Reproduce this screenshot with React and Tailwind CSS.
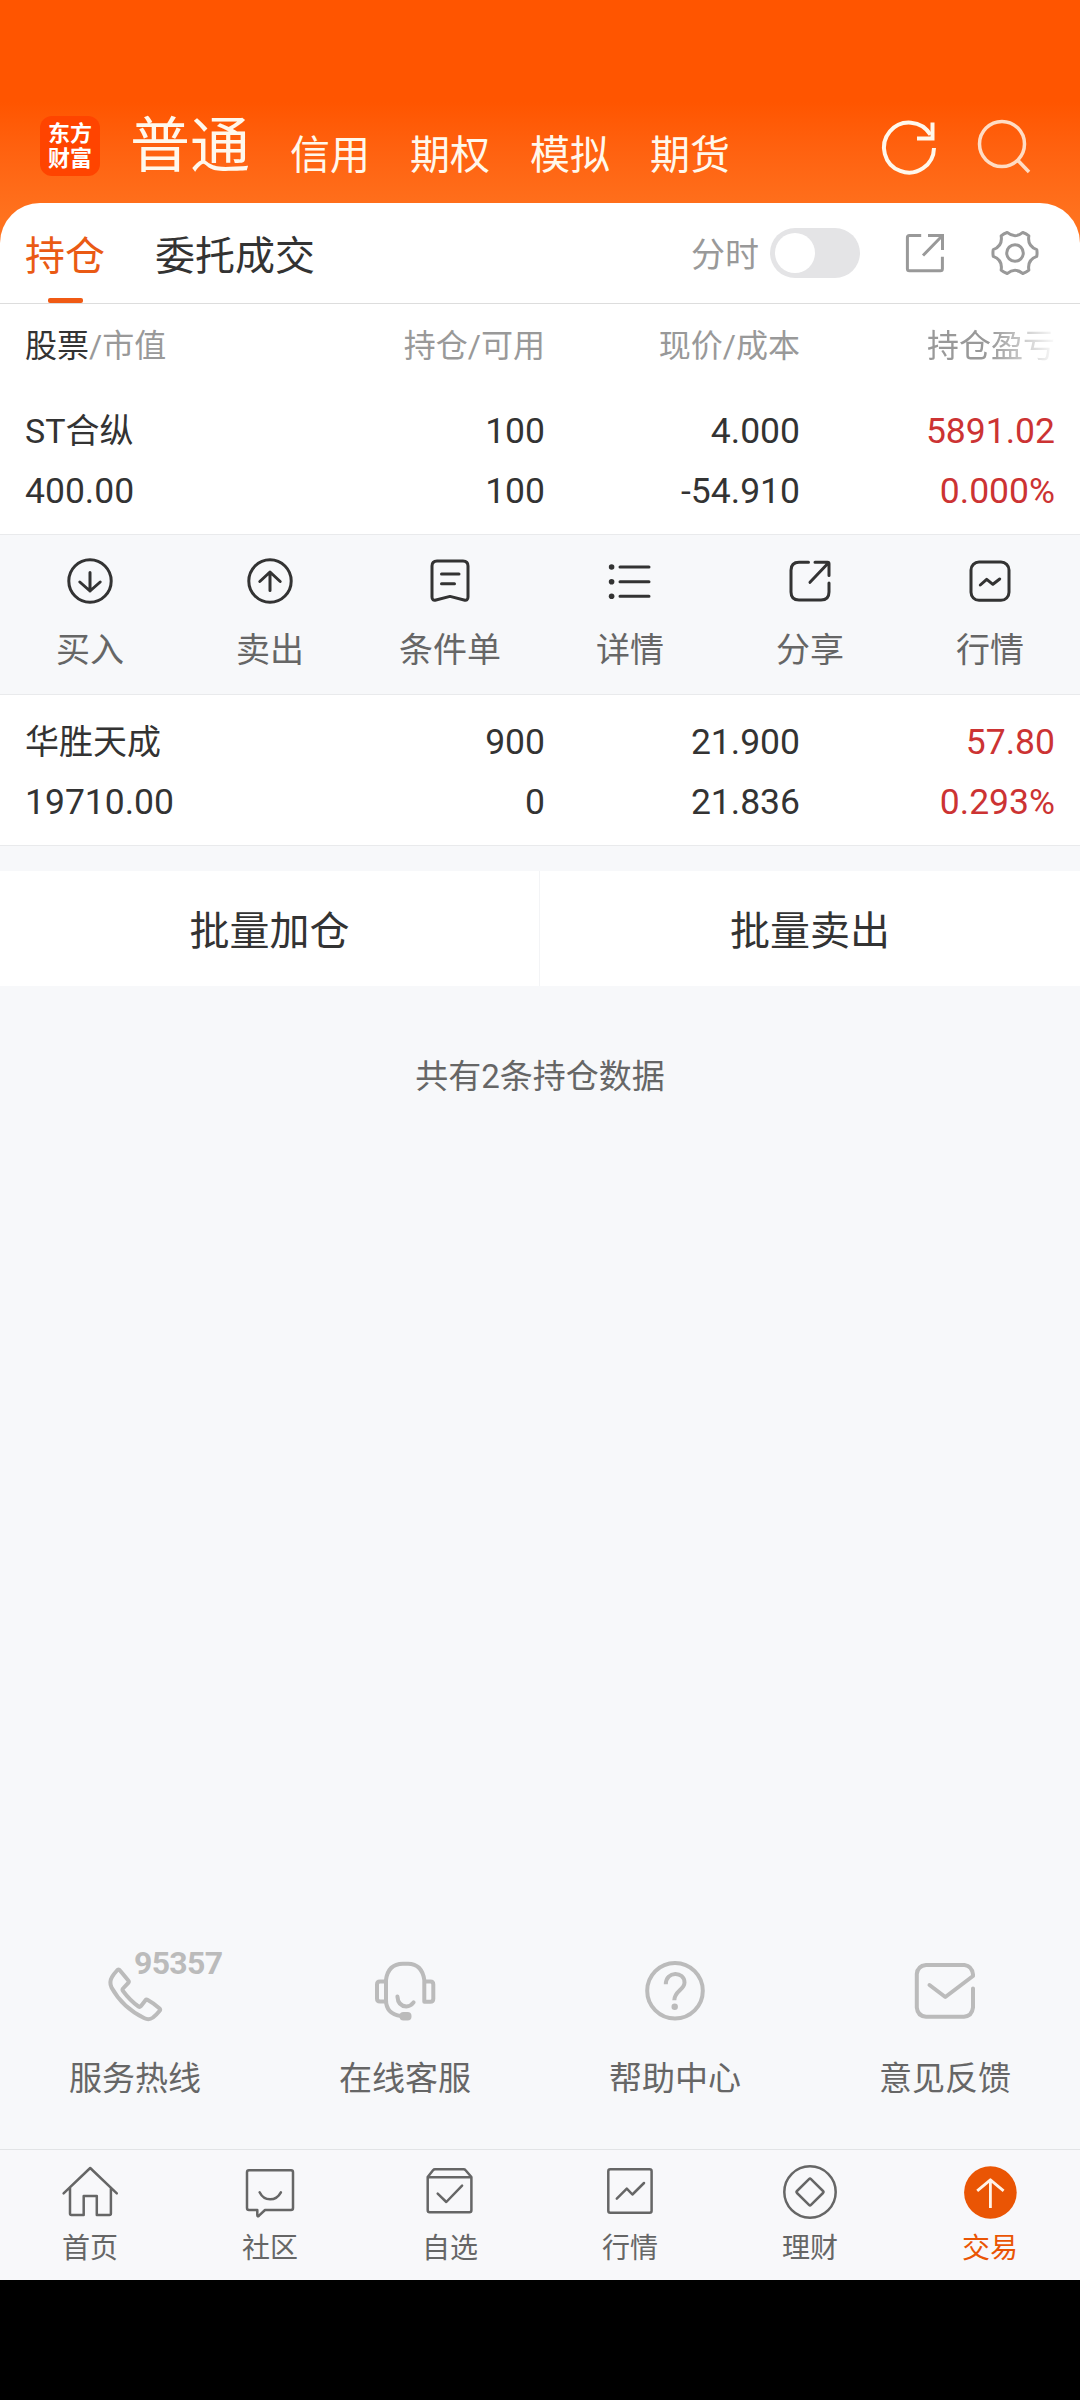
import React from 'react';

const marketTabs = ['信用', '期权', '模拟', '期货'];

const holdings = [
  {
    name: 'ST合纵',
    value: '400.00',
    cells: [
      ['100', '100'],
      ['4.000', '-54.910'],
    ],
    profit: ['5891.02', '0.000%'],
  },
  {
    name: '华胜天成',
    value: '19710.00',
    cells: [
      ['900', '0'],
      ['21.900', '21.836'],
    ],
    profit: ['57.80', '0.293%'],
  },
];

// Outline of a six-lobed gear centred on 24,24
const gearPath = () => {
  const point = (deg, r) => {
    const a = (deg * Math.PI) / 180;
    return `${(24 + r * Math.cos(a)).toFixed(2)} ${(24 + r * Math.sin(a)).toFixed(2)}`;
  };
  let d = `M${point(-9, 22)}`;
  for (let i = 0; i < 6; i++) {
    const a = i * 60;
    d += `Q${point(a, 22.4)} ${point(a + 9, 22)}Q${point(a + 30, 14)} ${point(a + 51, 22)}`;
  }
  return d + 'Z';
};

const Icon = ({ size, stroke, className, children }) => (
  <svg
    width={size}
    height={size}
    viewBox={`0 0 ${size} ${size}`}
    fill="none"
    stroke="currentColor"
    strokeWidth={stroke}
    strokeLinecap="round"
    strokeLinejoin="round"
    className={`shrink-0 overflow-visible ${className || ''}`}
  >
    {children}
  </svg>
);

const actions = [
  {
    label: '买入',
    icon: (
      <>
        <circle cx="24" cy="24" r="21.2" />
        <path d="M24 15.5V34M13.8 25 24 34l10.2-9" />
      </>
    ),
  },
  {
    label: '卖出',
    icon: (
      <>
        <circle cx="24" cy="24" r="21.2" />
        <path d="M24 33.5V15M13.8 24.5 24 15l10.2 9.5" />
      </>
    ),
  },
  {
    label: '条件单',
    icon: (
      <>
        <path d="M11 4h26q5 0 5 5v31q0 4-4 3l-14-3.6L10 43q-4 1-4-3V9q0-5 5-5Z" />
        <path d="M15.5 17H33M15.5 26.7h13" />
      </>
    ),
  },
  {
    label: '详情',
    icon: (
      <>
        <path d="M14 10h29M14 24.7h29M14 39.3h29" />
        <g fill="currentColor" stroke="none">
          <circle cx="5.6" cy="10" r="2.8" />
          <circle cx="5.6" cy="24.7" r="2.8" />
          <circle cx="5.6" cy="39.3" r="2.8" />
        </g>
      </>
    ),
  },
  {
    label: '分享',
    icon: (
      <>
        <path d="M22.5 5.3H13q-8 0-8 8V35q0 8 8 8h22q8 0 8-8v-9" />
        <path d="M29 5.3h12.5q1.5 0 1.5 1.5V18.5M24 25.3 42.3 6" />
      </>
    ),
  },
  {
    label: '行情',
    icon: (
      <>
        <rect x="5" y="5" width="38" height="38.3" rx="8" />
        <path d="m14.3 28 6.4-5.7 6.2 5 6.8-5.3" />
      </>
    ),
  },
];

const services = [
  {
    label: '服务热线',
    badge: '95357',
    icon: (
      <path d="M12 10.5q1.5-2 3 0l8.3 10q1 1.2 0 2.3L18 28.5q-1 1.2 0 2.5 7 9.5 15.5 15.5 1.3.8 2.3-.3l4.5-5.8q1-1.2 2.5-.4 5.5 3 11.5 8.2 1.5 1.3.2 2.800-3 3.7-6.500 6.5-4 3-8.500.8Q17.500 47.5 6.500 27.500 4 22 7 17q2-3.300 5-6.500Z" />
    ),
  },
  {
    label: '在线客服',
    icon: (
      <>
        <path d="M26 56Q11 54 11 40V20Q13 4 28 3.800h5Q47 4 49.300 20V41.700h6q3 0 3-3V24.500q0-3-3-3h-6M11 21.500H5q-3 0-3 3v14q0 3 3 3h6" />
        <path d="M22.400 36.500q.6 9.500 9 9.900 4.300 0 7.200-4" />
        <rect x="24.5" y="52" width="12" height="8.5" rx="4" fill="currentColor" stroke="none" />
      </>
    ),
  },
  {
    label: '帮助中心',
    icon: (
      <>
        <circle cx="30" cy="30.8" r="27.8" />
        <path strokeLinecap="butt" d="M20.8 24.3C20.8 10.5 39.5 11 39.5 22.5 39.5 30 29.3 31 29.3 40.3" />
        <circle cx="29.7" cy="46.7" r="3.2" fill="currentColor" stroke="none" />
      </>
    ),
  },
  {
    label: '意见反馈',
    icon: (
      <path d="M58 28.5V47.5q-1 8.5-9 9.2H11q-8.5-.7-9.2-9.2V14Q2.5 6 11 5h38.5q7.5 1 8.5 9.5V16L30.3 37 14.5 25" />
    ),
  },
];

const navItems = [
  {
    label: '首页',
    icon: (
      <path d="M1.6 29.3 28.2 4l26.6 25.3M8 24v25.5Q8 51 9.5 51h12.2V32h13.1v19h12.6q1.5 0 1.5-1.5V24" />
    ),
  },
  {
    label: '社区',
    icon: (
      <>
        <path d="M7 6.3h42q2 0 2 2V44q0 2-2 2H23l-6 5.7q-1.7 1.5-1.7-.7v-5H7q-2 0-2-2V8.3q0-2 2-2Z" />
        <path d="M17.6 28.3q3.500 7 10.5 7t10.8-7" />
      </>
    ),
  },
  {
    label: '自选',
    icon: (
      <>
        <path d="M5.7 13 11 6.3q.8-1 2-1h28.6q1.2 0 2 1L49.4 13v33.3q0 2-2 2H7.7q-2 0-2-2V13ZM5.7 13.3h43.7" />
        <path d="m15.7 29.7 8.6 8.3 15.8-16.3" />
      </>
    ),
  },
  {
    label: '行情',
    icon: (
      <>
        <rect x="6.3" y="5.3" width="43.3" height="43.4" rx="2" />
        <path d="m14.8 34.7 10-10 5.6 5.8L42 19" />
      </>
    ),
  },
  {
    label: '理财',
    icon: (
      <>
        <circle cx="28" cy="28" r="25.7" />
        <path d="M27 15.2q1-1 2 0L41 27q1 1 0 2L29 40.8q-1 1-2 0L15 29q-1-1 0-2Z" />
      </>
    ),
  },
  {
    label: '交易',
    active: true,
    icon: (
      <>
        <circle cx="28.4" cy="28.5" r="26.3" fill="currentColor" stroke="none" />
        <path stroke="#fff3e8" strokeWidth="2.8" strokeLinecap="butt" d="M28.4 44V15.5M15.2 26.8l13.2-11 13.2 11" />
      </>
    ),
  },
];

const Header = () => (
  <header className="flex h-[243px] items-start bg-linear-to-b from-[#ff5500] from-42% to-[#ff721e] to-90% pt-[116px] pl-10 text-[#fff8ec]">
    <div className="flex h-[60px] w-[60px] flex-col items-center justify-center rounded-xl bg-[#ff4400] pb-px text-[22px] leading-[25px] font-bold text-white">
      <span>东方</span>
      <span>财富</span>
    </div>
    <h1 className="mt-px ml-[30px] text-[60px] leading-[60px]">普通</h1>
    <nav className="mt-5 ml-10 flex gap-10 text-[40px] leading-[40px]">
      {marketTabs.map((tab) => (
        <span key={tab}>{tab}</span>
      ))}
    </nav>
    <div className="mr-12 ml-auto flex gap-9">
      <Icon size={60} stroke={4}>
        <g strokeLinecap="butt" strokeLinejoin="miter">
          <path d="M54 32A25 25 0 1 1 50.5 18.8" />
          <path d="M52.500 6.500v16H37" />
        </g>
      </Icon>
      <Icon size={56} stroke={3.5} className="text-[#ffdcc4]">
        <circle cx="26" cy="28" r="22.5" />
        <path strokeLinecap="butt" d="m41.500 44 11.500 12" />
      </Icon>
    </div>
  </header>
);

const TabBar = () => (
  <div className="flex h-[101px] border-b border-[#dddddd] pl-[25px] text-[40px] leading-[40px] text-[#333333]">
    <div className="flex flex-col items-center pt-[34px] text-[#ea5a14]">
      <span>持仓</span>
      <div className="mt-[21px] h-[5px] w-[35px] rounded-[2px] bg-[#f05a14]" />
    </div>
    <div className="ml-[50px] pt-[34px]">委托成交</div>
    <div className="mr-[41px] ml-auto flex items-center text-[#999999]">
      <span className="pt-1 text-[34px]">分时</span>
      <div className="ml-[11px] flex h-[50px] w-[90px] items-center rounded-full bg-[#e4e4e6] px-[5px]">
        <div className="h-10 w-10 rounded-full bg-white" />
      </div>
      <Icon size={40} stroke={3} className="ml-[45px]">
        <g strokeLinecap="butt">
          <path d="M16.2 2.500H4.400q-2 0-2 2v31.200q0 2 2 2h31q2 0 2-2v-12" />
          <path strokeLinejoin="miter" d="M23 2.500h14.500V17M18 22.500l19-19.500" />
        </g>
      </Icon>
      <Icon size={48} stroke={3} className="ml-[46px]">
        <path d={gearPath()} />
        <circle cx="24" cy="24" r="8.300" />
      </Icon>
    </div>
  </div>
);

const TableHead = () => (
  <div className="grid h-[81px] grid-cols-[265px_255px_255px_255px] pt-[22px] pl-[25px] text-right text-[32px] leading-[40px] text-[#999999]">
    <div className="text-left">
      <span className="text-[#333333]">股票</span>/市值
    </div>
    <div>持仓/可用</div>
    <div>现价/成本</div>
    <div className="mask-r-from-[190px] mask-r-to-[258px]">持仓盈亏</div>
  </div>
);

const HoldingRow = ({ item, className }) => (
  <div
    className={`grid grid-cols-[265px_255px_255px_255px] border-b border-[#e9eaec] pl-[25px] text-right text-[35.5px] leading-[60px] text-[#333333] ${className}`}
  >
    <div className="flex flex-col text-left">
      <span className="pt-px text-[34px] leading-[59px]">{item.name}</span>
      <span>{item.value}</span>
    </div>
    {item.cells.map((cell, i) => (
      <div key={i} className="flex flex-col">
        <span>{cell[0]}</span>
        <span>{cell[1]}</span>
      </div>
    ))}
    <div className="flex flex-col text-[#cc3333]">
      <span>{item.profit[0]}</span>
      <span>{item.profit[1]}</span>
    </div>
  </div>
);

const ActionBar = () => (
  <div className="grid h-40 grid-cols-6 border-b border-[#e9eaec] bg-[#f7f8fa] pt-[22px]">
    {actions.map((action) => (
      <div key={action.label} className="flex flex-col items-center text-[#333333]">
        <Icon size={48} stroke={3}>
          {action.icon}
        </Icon>
        <span className="mt-[25px] text-[34px] leading-[40px] text-[#666666]">{action.label}</span>
      </div>
    ))}
  </div>
);

const ServiceBar = () => (
  <div className="grid grid-cols-4 pb-[50px]">
    {services.map((service) => (
      <div key={service.label} className="flex flex-col items-center">
        <div className="relative text-[#bbbbbb]">
          <Icon size={60} stroke={4}>
            {service.icon}
          </Icon>
          {service.badge && (
            <span className="absolute -top-[13px] left-[29px] text-[32px] leading-[32px] font-bold tracking-[-0.7px]">
              {service.badge}
            </span>
          )}
        </div>
        <span className="mt-[39px] text-[33px] leading-[40px] text-[#666666]">{service.label}</span>
      </div>
    ))}
  </div>
);

const BottomNav = () => (
  <nav className="grid h-[131px] grid-cols-6 border-t border-[#e2e4e6] bg-[#f8f8fa] pt-[14px]">
    {navItems.map((item) => (
      <div
        key={item.label}
        className={`flex flex-col items-center ${item.active ? 'text-[#ea5504]' : 'text-[#666666]'}`}
      >
        <Icon size={56} stroke={2.5}>
          {item.icon}
        </Icon>
        <span className="mt-[13px] text-[28px] leading-[32px]">{item.label}</span>
      </div>
    ))}
  </nav>
);

const App = () => {
  return (
    <div className="flex h-[2400px] w-[1080px] flex-col bg-[#f7f8fa] font-['Roboto','Noto_Sans_CJK_SC',sans-serif]">
      <Header />

      {/* Positions */}
      <section className="-mt-10 rounded-t-[40px] bg-white">
        <TabBar />
        <TableHead />
        <HoldingRow item={holdings[0]} className="h-[150px] pt-4" />
        <ActionBar />
        <HoldingRow item={holdings[1]} className="h-[151px] pt-[17px]" />
      </section>

      {/* Batch buttons */}
      <div className="mt-[25px] grid h-[115px] grid-cols-2 bg-white text-center text-[40px] leading-[40px] text-[#333333]">
        <div className="border-r border-[#f3f4f6] pt-[41px]">批量加仓</div>
        <div className="pt-[41px]">批量卖出</div>
      </div>

      <p className="pt-[71px] text-center text-[33px] leading-[40px] text-[#666666]">共有2条持仓数据</p>

      <div className="flex-1" />
      <ServiceBar />
      <BottomNav />
      <div className="h-[120px] bg-black" />
    </div>
  );
};

export default App;
